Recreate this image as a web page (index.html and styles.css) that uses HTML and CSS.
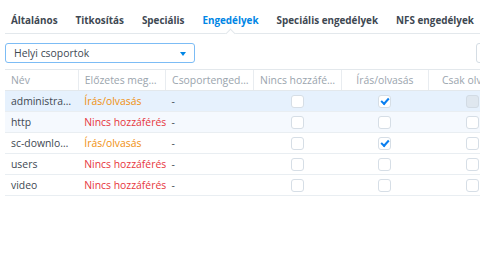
FILE: index.html
```html
<!DOCTYPE html>
<html>
<head>
	<title>Engedélyek</title>
	<link rel="stylesheet" href="styles.css">
</head>
<body>

<div class="panel">
	<div class="tabs">
		<span class="tab">Általános</span>
		<span class="tab">Titkosítás</span>
		<span class="tab">Speciális</span>
		<span class="tab active">Engedélyek</span>
		<span class="tab">Speciális engedélyek</span>
		<span class="tab">NFS engedélyek</span>
	</div>

	<div class="toolbar">
		<div class="select">
			<span>Helyi csoportok</span>
			<span class="arrow"></span>
		</div>
		<div class="search"></div>
	</div>

	<table class="grid">
		<colgroup>
			<col class="c-name"><col class="c-pre"><col class="c-grp"><col class="c-chk"><col class="c-chk"><col class="c-chk">
		</colgroup>
		<thead>
			<tr>
				<th>Név</th>
				<th>Előzetes meg…</th>
				<th>Csoportenged…</th>
				<th class="mid">Nincs hozzáfé…</th>
				<th class="mid">Írás/olvasás</th>
				<th class="mid">Csak olvasás</th>
			</tr>
		</thead>
		<tbody>
			<tr class="selected">
				<td>administra…</td>
				<td class="rw">Írás/olvasás</td>
				<td>-</td>
				<td class="mid"><span class="box"></span></td>
				<td class="mid"><span class="box checked"></span></td>
				<td class="mid"><span class="box disabled"></span></td>
			</tr>
			<tr class="hover">
				<td>http</td>
				<td class="na">Nincs hozzáférés</td>
				<td>-</td>
				<td class="mid"><span class="box"></span></td>
				<td class="mid"><span class="box"></span></td>
				<td class="mid"><span class="box"></span></td>
			</tr>
			<tr>
				<td>sc-downlo…</td>
				<td class="rw">Írás/olvasás</td>
				<td>-</td>
				<td class="mid"><span class="box"></span></td>
				<td class="mid"><span class="box checked"></span></td>
				<td class="mid"><span class="box"></span></td>
			</tr>
			<tr>
				<td>users</td>
				<td class="na">Nincs hozzáférés</td>
				<td>-</td>
				<td class="mid"><span class="box"></span></td>
				<td class="mid"><span class="box"></span></td>
				<td class="mid"><span class="box"></span></td>
			</tr>
			<tr>
				<td>video</td>
				<td class="na">Nincs hozzáférés</td>
				<td>-</td>
				<td class="mid"><span class="box"></span></td>
				<td class="mid"><span class="box"></span></td>
				<td class="mid"><span class="box"></span></td>
			</tr>
		</tbody>
	</table>
</div>

</body>
</html>
```

FILE: styles.css
```css
html, body {
	margin: 0;
	background: #ffffff;
	overflow: hidden;
}
body {
	font-family: "Open Sans", "Noto Sans", sans-serif;
	font-size: 10.4px;
	color: #3e4852;
}
.panel {
	padding-left: 5px;
	width: 560px;
}

/* tabs */
.tabs {
	display: flex;
	gap: 18px;
	height: 33px;
	padding-left: 6px;
	border-bottom: 1px solid #e3e8ec;
}
.tab {
	font-weight: 700;
	font-size: 9.9px;
	color: #3e4852;
	white-space: nowrap;
	position: relative;
	line-height: 41px;
}
.tab.active {
	color: #0086e5;
}
.tab.active::after {
	content: "";
	position: absolute;
	left: 50%;
	bottom: -4px;
	width: 6px;
	height: 6px;
	margin-left: -3px;
	background: #ffffff;
	border-left: 1px solid #e3e8ec;
	border-top: 1px solid #e3e8ec;
	transform: rotate(45deg);
}

/* toolbar */
.toolbar {
	display: flex;
	padding-top: 9px;
	height: 26px;
	border-bottom: 1px solid #e3e8ec;
}
.select {
	flex: none;
	width: 172px;
	height: 18px;
	border: 1px solid #7cbcf5;
	border-radius: 3px;
	display: flex;
	align-items: center;
	justify-content: space-between;
	padding: 0 8px;
}
.arrow {
	width: 0;
	height: 0;
	border-left: 3.5px solid transparent;
	border-right: 3.5px solid transparent;
	border-top: 4px solid #0086e5;
	margin-top: 1px;
}
.search {
	flex: none;
	width: 120px;
	height: 18px;
	border: 1px solid #d5dde4;
	border-radius: 3px;
	margin-left: 281px;
}

/* grid */
.grid {
	table-layout: fixed;
	border-collapse: collapse;
	width: 511px;
	font-size: 10.4px;
}
.c-name { width: 73px; }
.c-pre { width: 87px; }
.c-grp { width: 88px; }
.c-chk { width: 87px; }
.grid th {
	font-weight: 400;
	color: #9aa4ad;
	text-align: left;
	height: 20px;
	padding: 0 0 0 6px;
	border-left: 1px solid #e8ecf0;
	border-bottom: 1px solid #e3e8ec;
	white-space: nowrap;
	overflow: hidden;
}
.grid th:first-child {
	border-left: none;
}
.grid td {
	height: 20px;
	padding: 0 0 0 6px;
	border-bottom: 1px solid #e9eef2;
	white-space: nowrap;
	overflow: hidden;
}
.grid .mid {
	text-align: center;
	padding: 0;
}
.grid tr.selected td {
	background: #e6f1fd;
}
.grid tr.hover td {
	background: #f5f9fe;
}
.rw { color: #f0900f; }
.na { color: #e7363d; }

.box {
	display: inline-block;
	width: 11px;
	height: 11px;
	border: 1px solid #d6dee6;
	border-radius: 3px;
	background: #ffffff;
	vertical-align: middle;
	position: relative;
}
.box.disabled {
	background: #dfe7ef;
	border-color: #d2dbe4;
}
.box.checked::after {
	content: "";
	position: absolute;
	left: 2px;
	top: 2px;
	width: 6px;
	height: 3px;
	border-left: 2px solid #0a7ff0;
	border-bottom: 2px solid #0a7ff0;
	transform: rotate(-48deg);
}
```
